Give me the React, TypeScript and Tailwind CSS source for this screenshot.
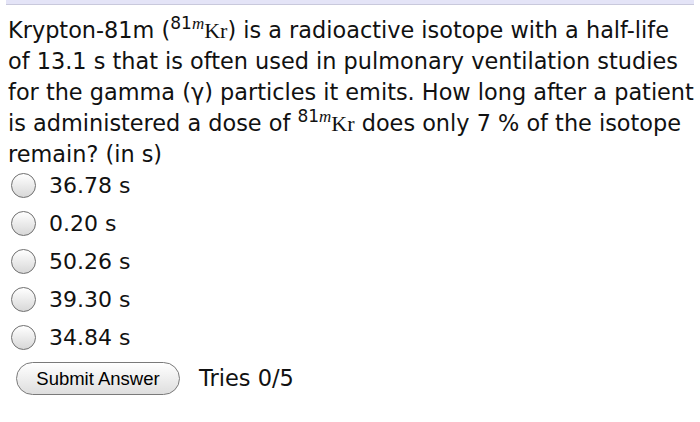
import React from "react";

const options = ["36.78 s", "0.20 s", "50.26 s", "39.30 s", "34.84 s"];

function Iso() {
  return (
    <span className="whitespace-nowrap">
      <span className="text-[17px] align-[9px] leading-none">
        81<span className="italic" style={{ fontFamily: '"Liberation Serif", serif' }}>m</span>
      </span>
      <span className="text-[22px]" style={{ fontFamily: '"Liberation Serif", serif' }}>Kr</span>
    </span>
  );
}

export default function App() {
  return (
    <div className="w-[700px] h-[422px] bg-white text-[#111]" style={{ fontFamily: '"DejaVu Sans", Verdana, sans-serif' }}>
      <div className="mx-[6px] h-[5px] bg-[#e4e4f7] border-b border-[#c9c9dc]" />
      <div className="pl-[8px] pt-[10px] w-[700px]">
        <p className="text-[22.4px] leading-[31px] whitespace-nowrap">
          Krypton-81m (<Iso />) is a radioactive isotope with a half-life
          <br />
          of 13.1 s that is often used in pulmonary ventilation studies
          <br />
          for the gamma (γ) particles it emits. How long after a patient
          <br />
          is administered a dose of <Iso /> does only 7 % of the isotope
          <br />
          remain? (in s)
        </p>
        <div className="flex flex-col gap-[13px] mt-[3px] ml-[3px]">
          {options.map((o) => (
            <div key={o} className="flex items-center h-[25px]">
              <div className="w-[25px] h-[25px] rounded-full border border-[#6f6f6f] bg-gradient-to-b from-[#ffffff] to-[#d8d8d8]" />
              <span className="ml-[13px] text-[22px] leading-[25px]">{o}</span>
            </div>
          ))}
        </div>
        <div className="flex items-center mt-[12px] ml-[8px]">
          <div
            className="h-[33px] w-[164px] rounded-full border border-[#7a7a7a] bg-gradient-to-b from-[#ffffff] to-[#dedede] flex items-center justify-center text-[18.5px] text-black"
            style={{ fontFamily: '"Liberation Sans", Arial, sans-serif' }}
          >
            Submit Answer
          </div>
          <span className="ml-[19px] text-[22.5px]">Tries 0/5</span>
        </div>
      </div>
    </div>
  );
}
